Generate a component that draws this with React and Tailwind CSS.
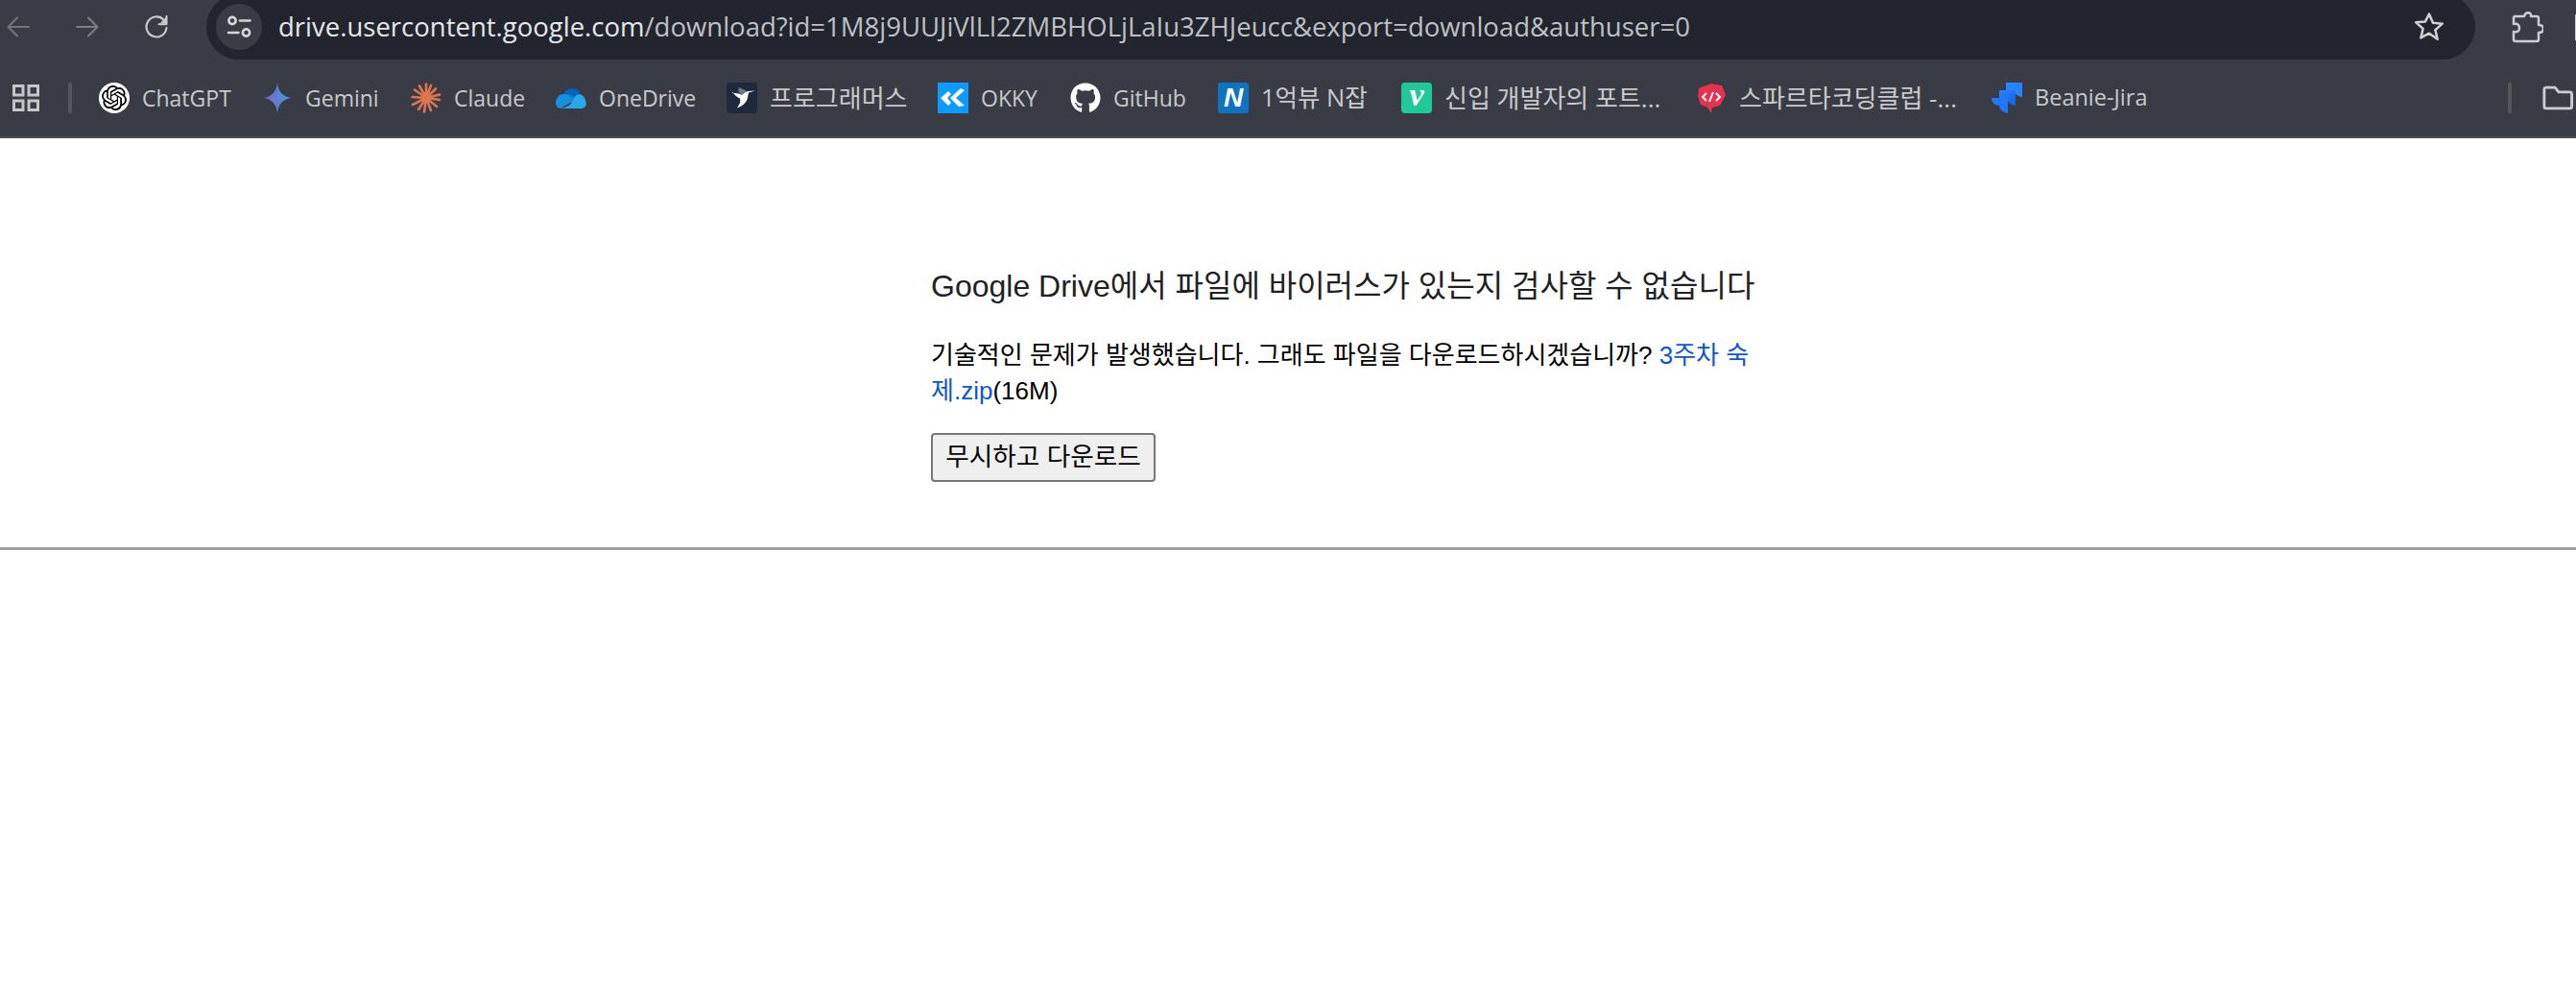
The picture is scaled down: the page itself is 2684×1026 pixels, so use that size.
import React from "react";
import { SiOpenai } from "react-icons/si";
import { FaGithub } from "react-icons/fa";

const ui = { fontFamily: '"Open Sans","Noto Sans CJK KR",sans-serif' };

const Stroke = ({ className, children, vb = "0 0 24 24", sw = 2.2, color }) => (
  <svg viewBox={vb} className={className} fill="none" stroke={color} strokeWidth={sw} strokeLinecap="round" strokeLinejoin="round">
    {children}
  </svg>
);

const Gemini = () => (
  <svg viewBox="0 0 32 32" className="w-[32px] h-[32px] shrink-0">
    <defs>
      <linearGradient id="gem" x1="0" y1="0.6" x2="1" y2="0.4">
        <stop offset="0" stopColor="#7f5fc0" />
        <stop offset="0.5" stopColor="#5f7fd0" />
        <stop offset="1" stopColor="#36a4ee" />
      </linearGradient>
    </defs>
    <path d="M16 0C17 9 21 15 31 16 21 17 17 23 16 32 15 23 11 17 1 16 11 15 15 9 16 0Z" fill="url(#gem)" />
  </svg>
);

const Claude = () => (
  <svg viewBox="0 0 32 32" className="w-[32px] h-[32px] shrink-0" stroke="#dd7550" strokeWidth="2.6" strokeLinecap="round">
    <path d="M16 16V1.500M16 16l5-13M16 16l10-9.500M16 16l14-3.500M16 16l14 2M16 16l11 9M16 16l5 13M16 16l-2 14.500M16 16l-8 12M16 16L2 23M16 16L1.500 15M16 16L4 7.500M16 16L9 3.500" />
  </svg>
);

const OneDrive = () => (
  <svg viewBox="0 0 32 24" className="w-[32px] h-[24px] shrink-0">
    <path d="M8 10C9 2 20-1 25 6l-7 9-9-4Z" fill="#0364b8" />
    <path d="M10 9c3-1 6-1 8 1l13 6-8 2L8 16Z" fill="#0f78d4" />
    <path d="M8 8C3 8 0 13 0 17c0 3 2 6 5 6l15-9-7-5c-2-1-3-1-5-1Z" fill="#1490df" />
    <path d="M24 8c4 0 7 4 7 7 2 3 0 8-4 8H5c7-1 11-4 13-8 1-3 3-7 6-7Z" fill="#28a8ea" />
  </svg>
);

const Programmers = () => (
  <svg viewBox="0 0 32 32" className="w-[32px] h-[32px] shrink-0">
    <rect width="32" height="32" rx="4" fill="#1e2a3c" />
    <path d="M13 5l4 2 3 1 1 4-5 1-4-4Z" fill="#6d7786" />
    <path d="M6 11c4 0 7 0 10 2l4-3 2-1 8-.500-7 2-1 5c-1 6-6 9-11 11 2-3 4-6 3-10-3-1-6-4-8-7Z" fill="#fff" />
  </svg>
);

const Okky = () => (
  <svg viewBox="0 0 32 32" className="w-[32px] h-[32px] shrink-0">
    <rect width="32" height="32" fill="#0c9bff" />
    <path d="M11 9 3 16l8 8 3-3-4-5 4-4Z" fill="#fff" />
    <path d="M24 6 13 16l9 9 6-1-9-8 9-8Z" fill="#fff" />
  </svg>
);

const Sparta = () => (
  <svg viewBox="0 0 32 32" className="w-[32px] h-[32px] shrink-0">
    <path d="M3 6l13-5 11 2 4 10-6 11-8 2-1 6-4-6-7-3-3-9Z" fill="#e8304f" />
    <path d="M11 11l-4 4 4 4M21 11l4 4-4 4M18 10l-4 10" fill="none" stroke="#fff" strokeWidth="2" />
  </svg>
);

const Jira = () => (
  <svg viewBox="0 0 32 32" className="w-[32px] h-[32px] shrink-0">
    <defs>
      <linearGradient id="jira" x1="0" y1="0" x2="0.6" y2="1">
        <stop offset="0" stopColor="#2684ff" />
        <stop offset="1" stopColor="#1565e0" />
      </linearGradient>
    </defs>
    <path d="M15 0h17v15c-4 0-8-3-8-7h-9Z" fill="#2684ff" />
    <path d="M8 8h17v16c-5-1-9-4-9-8H8Z" fill="url(#jira)" />
    <path d="M0 16h17v16c-5-1-9-4-9-8-4 0-8-3-8-8Z" fill="#1f78ff" />
  </svg>
);

const bookmarks = [
  { icon: <span className="w-[32px] h-[32px] shrink-0 rounded-full bg-white flex items-center justify-center"><SiOpenai className="w-[26px] h-[26px] text-black" /></span>, label: "ChatGPT", w: "w-[170px]", t: "text-[23px]" },
  { icon: <Gemini />, label: "Gemini", w: "w-[155px]", t: "text-[23px]" },
  { icon: <Claude />, label: "Claude", w: "w-[151px]", t: "text-[23px]" },
  { icon: <OneDrive />, label: "OneDrive", w: "w-[178px]", t: "text-[23px]" },
  { icon: <Programmers />, label: "프로그래머스", w: "w-[220px]", t: "text-[26px]" },
  { icon: <Okky />, label: "OKKY", w: "w-[138px]", t: "text-[23px]" },
  { icon: <FaGithub className="w-[32px] h-[32px] shrink-0 text-white" />, label: "GitHub", w: "w-[154px]", t: "text-[23px]" },
  {
    icon: <span className="w-[32px] h-[32px] shrink-0 rounded-[3px] bg-[#0f74c0] flex items-center justify-center text-white font-black italic text-[28px] leading-none" style={{ fontFamily: '"Liberation Sans",sans-serif' }}>N</span>,
    label: "1억뷰 N잡", w: "w-[191px]", t: "text-[25.500px]",
  },
  {
    icon: <span className="w-[32px] h-[32px] shrink-0 rounded-[4px] bg-[#20c997] flex items-center justify-center text-white font-bold italic text-[34px] leading-none pb-[6px]" style={{ fontFamily: '"Liberation Serif",serif' }}>v</span>,
    label: "신입 개발자의 포트...", w: "w-[307px]", t: "text-[26px]",
  },
  { icon: <Sparta />, label: "스파르타코딩클럽 -...", w: "w-[308px]", t: "text-[26px]" },
  { icon: <Jira />, label: "Beanie-Jira", w: "w-[165px]", t: "text-[23.500px]" },
];

export default function App() {
  return (
    <div className="w-[2684px] h-[1026px] overflow-hidden bg-white">
      <header className="bg-[#3a3c45]" style={ui}>
        <div className="h-[62px] flex items-end overflow-hidden">
          <div className="h-[68px] flex items-center pl-[7px] gap-[48px]">
            <Stroke className="w-[24px] h-[24px]" color="#74767c" sw="2">
              <path d="M23 12H2M11 2.500 1.500 12l9.500 9.500" />
            </Stroke>
            <Stroke className="w-[24px] h-[24px]" color="#7b7d83" sw="2">
              <path d="M1 12h21M13 2.500l9.500 9.500L13 21.500" />
            </Stroke>
            <Stroke className="w-[24px] h-[24px]" color="#c9cbd1" sw="2.100">
              <path d="M22.500 13a10.500 10.500 0 1 1-3-8.500L22 7" />
              <path d="M22.500 1.500v7h-7" fill="#c9cbd1" stroke="none" />
              <path d="M22.500 1v8.200h-8" />
            </Stroke>
          </div>
          <div className="h-[68px] w-[2364px] ml-[40px] rounded-full bg-[#22252d] flex items-center pl-[10px] pr-[32px]">
            <span className="w-[48px] h-[48px] rounded-full bg-[#3a3c45] flex items-center justify-center shrink-0">
              <Stroke className="w-[26px] h-[24px]" vb="0 0 26 24" color="#d3d5da" sw="2.600">
                <circle cx="6" cy="5.500" r="3.600" />
                <path d="M14 5.500h10.500M2 18h10.500" />
                <circle cx="20.500" cy="18" r="3.600" />
              </Stroke>
            </span>
            <span className="ml-[17px] text-[27.500px] whitespace-nowrap text-[#bfc0c4] leading-none">
              <span className="text-[#e6e7ea]">drive.usercontent.google.com</span>/download?id=1M8j9UUJiVlLl2ZMBHOLjLaIu3ZHJeucc&amp;export=download&amp;authuser=0
            </span>
            <Stroke className="ml-auto w-[32px] h-[32px]" color="#d0d0d0" sw="1.900" vb="0 0 24 24">
              <path d="M12 2l3 6.800 7.300.700-5.500 4.900 1.700 7.200L12 17l-6.500 3.600 1.700-7.200-5.500-4.900 7.300-.700Z" />
            </Stroke>
          </div>
          <div className="h-[68px] flex items-center ml-[38px]">
            <Stroke className="w-[33px] h-[33px]" color="#c9ccd6" sw="2.500" vb="0 0 33 33">
              <path d="M13 5h-9a2 2 0 0 0-2 2v6c4-1 6 1 6 4s-2 5-6 4v8a2 2 0 0 0 2 2h22a2 2 0 0 0 2-2v-7c4 0 5-2 5-4s-1-4-5-4V7a2 2 0 0 0-2-2h-6c1-5-6-5-7 0Z" />
            </Stroke>
            <span className="ml-[33px] w-[1px] h-[27px] bg-[#c9ccd6]" />
          </div>
        </div>

        <nav className="h-[82px] border-b-2 border-[#4b4b4d] flex items-center text-[#c9c9c9] leading-none">
          <svg viewBox="0 0 28 28" className="ml-[13px] w-[28px] h-[28px] shrink-0" fill="none" stroke="#c6c6c6" strokeWidth="3">
            <rect x="1.500" y="1.500" width="9.500" height="9.500" />
            <rect x="17" y="1.500" width="9.500" height="9.500" />
            <rect x="1.500" y="17" width="9.500" height="9.500" />
            <rect x="17" y="17" width="9.500" height="9.500" />
          </svg>
          <span className="ml-[30px] w-[4px] h-[32px] shrink-0 rounded-full bg-[#55575e]" />
          <div className="ml-[28px] flex items-center">
            {bookmarks.map((b) => (
              <div key={b.label} className={`flex items-center shrink-0 ${b.w}`}>
                {b.icon}
                <span className={`ml-[13px] whitespace-nowrap ${b.t}`}>{b.label}</span>
              </div>
            ))}
          </div>
          <span className="ml-auto w-[4px] h-[32px] shrink-0 rounded-full bg-[#55575e]" />
          <Stroke className="ml-[32px] mr-[3px] w-[32px] h-[26px] shrink-0" color="#cdcdcd" sw="3" vb="0 0 34 26">
            <path d="M2 3.500a2 2 0 0 1 2-2h10l4 5h13a2 2 0 0 1 1.500 2v14a2 2 0 0 1-2 2H4a2 2 0 0 1-2-2Z" />
          </Stroke>
        </nav>
      </header>

      <main className="pt-[136px]" style={{ fontFamily: '"Liberation Sans","Noto Sans CJK KR",sans-serif' }}>
        <div className="ml-[970px] w-[860px]">
          <h3 className="text-[32px] leading-[37px] text-[#202124] whitespace-nowrap">Google Drive에서 파일에 바이러스가 있는지 검사할 수 없습니다</h3>
          <p className="mt-[35px] text-[26px] leading-[37px] text-black break-all">
            기술적인 문제가 발생했습니다. 그래도 파일을 다운로드하시겠습니까? <a className="text-[#0b57d0]">3주차 숙제.zip</a>(16M)
          </p>
          <button className="mt-[25px] w-[234px] h-[51px] rounded-[4px] border-2 border-[#767676] bg-[#efefef] text-black text-[26.670px] leading-none flex items-center justify-center">
            무시하고 다운로드
          </button>
        </div>
        <hr className="mt-[68px] border-0 h-[3px] bg-[#a0a0a0]" />
      </main>
    </div>
  );
}
